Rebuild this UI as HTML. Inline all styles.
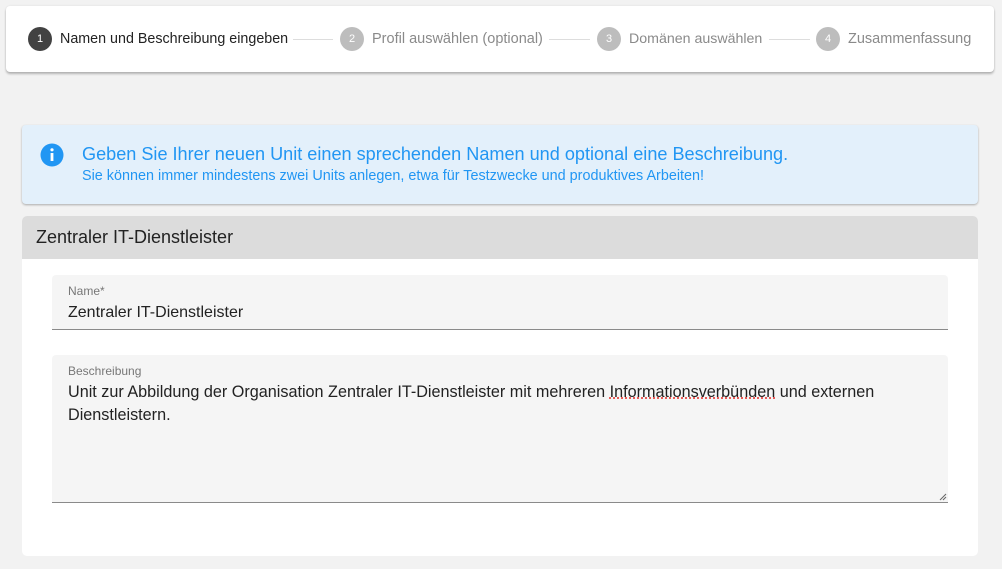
<!DOCTYPE html>
<html><head><meta charset="utf-8"><style>
*{margin:0;padding:0;box-sizing:border-box}
body{width:1002px;height:569px;background:#f2f2f2;font-family:"Liberation Sans",sans-serif;position:relative;overflow:hidden;color:#222}
.a{position:absolute;white-space:nowrap}
.stepper{position:absolute;left:6px;top:6px;width:988px;height:66px;background:#fff;border-radius:4px;box-shadow:0 2px 2px rgba(0,0,0,.25),0 0 2px rgba(0,0,0,.08)}
.c{position:absolute;width:24px;height:24px;border-radius:50%;background:#bdbdbd;color:#fff;font-size:11px;text-align:center;line-height:24px;top:27px}
.l{position:absolute;top:39px;height:1px;background:#ddd}
.st{position:absolute;top:31px;font-size:14.5px;color:#8a8a8a;white-space:nowrap}
</style></head><body>
<div class="stepper"></div>
<div class="c" style="left:28px;background:#424242">1</div>
<div class="st" style="left:60px;color:#222;font-size:14.3px">Namen und Beschreibung eingeben</div>
<div class="l" style="left:293px;width:40px"></div>
<div class="c" style="left:340px">2</div>
<div class="st" style="left:372px">Profil auswählen (optional)</div>
<div class="l" style="left:549px;width:41px"></div>
<div class="c" style="left:597px">3</div>
<div class="st" style="left:629px;font-size:14.2px">Domänen auswählen</div>
<div class="l" style="left:769px;width:41px"></div>
<div class="c" style="left:816px">4</div>
<div class="st" style="left:848px">Zusammenfassung</div>

<div style="position:absolute;left:22px;top:125px;width:956px;height:79px;background:#e3f0fb;border-radius:4px;box-shadow:0 1px 2px rgba(0,0,0,.3)"></div>
<svg class="a" style="left:40px;top:143px" width="24" height="24" viewBox="0 0 24 24"><circle cx="12" cy="12" r="11.5" fill="#2196f3"/><rect x="10.6" y="10" width="2.8" height="8" fill="#fff"/><circle cx="12" cy="6.8" r="1.6" fill="#fff"/></svg>
<div class="a" style="left:82px;top:144px;font-size:18.1px;color:#2196f3">Geben Sie Ihrer neuen Unit einen sprechenden Namen und optional eine Beschreibung.</div>
<div class="a" style="left:82px;top:168px;font-size:14.4px;color:#2196f3">Sie können immer mindestens zwei Units anlegen, etwa für Testzwecke und produktives Arbeiten!</div>

<div style="position:absolute;left:22px;top:216px;width:956px;height:340px;background:#fff;border-radius:5px;overflow:hidden">
<div style="height:43px;background:#dcdcdc"></div></div>
<div class="a" style="left:36px;top:227px;font-size:18px;color:#222">Zentraler IT-Dienstleister</div>

<div style="position:absolute;left:52px;top:275px;width:896px;height:55px;background:#f5f5f5;border-radius:4px 4px 0 0;border-bottom:1px solid #8a8a8a"></div>
<div class="a" style="left:68px;top:284px;font-size:12px;color:#777">Name*</div>
<div class="a" style="left:68px;top:304px;font-size:16px;color:#222">Zentraler IT-Dienstleister</div>

<div style="position:absolute;left:52px;top:355px;width:896px;height:148px;background:#f5f5f5;border-radius:4px 4px 0 0;border-bottom:1px solid #8a8a8a"></div>
<div class="a" style="left:68px;top:364px;font-size:12px;color:#777">Beschreibung</div>
<div class="a" style="left:68px;top:381px;font-size:16.2px;line-height:23px;color:#222">Unit zur Abbildung der Organisation Zentraler IT-Dienstleister mit mehreren <span style="text-decoration:underline dotted #e53935">Informationsverbünden</span> und externen<br>Dienstleistern.</div>
<svg class="a" style="left:939px;top:493px" width="8" height="8"><path d="M1 7L7 1M4 7L7 4" stroke="#666" stroke-width="1"/></svg>
</body></html>
